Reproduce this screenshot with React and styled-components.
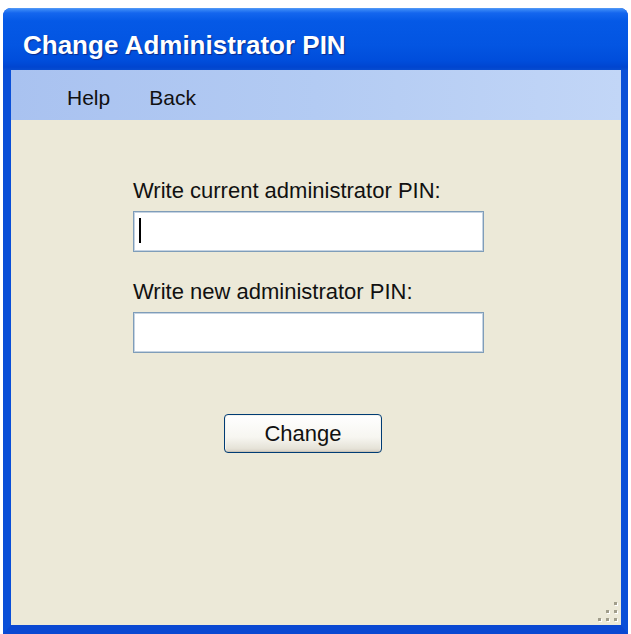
import React from "react";
import styled, { createGlobalStyle } from "styled-components";

const GlobalStyle = createGlobalStyle`
  html, body {
    margin: 0;
    padding: 0;
    background: #ffffff;
  }
  body {
    font-family: "Liberation Sans", Arial, sans-serif;
  }
`;

const ResizeGrip = () => (
  <svg width="22" height="22" viewBox="0 0 22 22">
    {[
      [16, 3],
      [8, 11],
      [16, 11],
      [0, 19],
      [8, 19],
      [16, 19],
    ].map(([x, y]) => (
      <g key={`${x}-${y}`}>
        <rect x={x + 1} y={y - 2} width="3" height="3" fill="#ffffff" />
        <rect x={x} y={y - 3} width="3" height="3" fill="#a19e8c" />
      </g>
    ))}
  </svg>
);

const App = () => {
  return (
    <>
      <GlobalStyle />
      <Page>
        <Window>
          <TitleBar>
            <Title>Change Administrator PIN</Title>
          </TitleBar>
          <Frame>
            <MenuBar>
              <MenuItem>Help</MenuItem>
              <MenuItem>Back</MenuItem>
            </MenuBar>
            <Content>
              <Form>
                <Field>
                  <Label htmlFor="current-pin">Write current administrator PIN:</Label>
                  <InputWrap>
                    <TextInput id="current-pin" type="password" />
                    <Caret />
                  </InputWrap>
                </Field>
                <Field $top={27}>
                  <Label htmlFor="new-pin">Write new administrator PIN:</Label>
                  <InputWrap>
                    <TextInput id="new-pin" type="password" />
                  </InputWrap>
                </Field>
                <ChangeButton>Change</ChangeButton>
              </Form>
              <Footer>
                <ResizeGrip />
              </Footer>
            </Content>
          </Frame>
        </Window>
      </Page>
    </>
  );
};

const Page = styled.div`
  width: 631px;
  height: 634px;
  padding: 8px 3px 0 3px;
  box-sizing: border-box;
`;

const Window = styled.div`
  display: flex;
  flex-direction: column;
  width: 625px;
  height: 626px;
  border-radius: 8px 8px 0 0;
  overflow: hidden;
  background: #0046d8;
`;

const TitleBar = styled.div`
  display: flex;
  align-items: flex-start;
  height: 62px;
  padding: 21px 0 0 20px;
  box-sizing: border-box;
  background: linear-gradient(
    to bottom,
    #3d8bf7 0px,
    #1466ee 4px,
    #0559e6 12px,
    #0355e2 36px,
    #004ddb 52px,
    #0045d0 58px,
    #0a4fd0 62px
  );
  border-top: 1px solid #4d95f5;
`;

const Title = styled.span`
  font-family: "Liberation Sans", Arial, sans-serif;
  font-weight: bold;
  font-size: 26px;
  line-height: 30px;
  color: #ffffff;
  text-shadow: 1px 1px 1px #0b2b8c;
`;

const Frame = styled.div`
  flex: 1;
  display: flex;
  flex-direction: column;
  border-left: 8px solid #0a4fd8;
  border-right: 7px solid #0a4fd8;
  border-bottom: 9px solid #0a48d2;
  box-shadow: inset 1px 0 0 #1e6cf0, inset -1px 0 0 #0034b8;
`;

const MenuBar = styled.div`
  display: flex;
  gap: 39px;
  height: 50px;
  padding: 16px 0 0 56px;
  box-sizing: border-box;
  background: linear-gradient(to right, #a9c2f0 0%, #b3cbf3 50%, #c2d6f7 100%);
`;

const MenuItem = styled.span`
  font-size: 21px;
  line-height: 24px;
  color: #111111;
`;

const Content = styled.div`
  flex: 1;
  display: flex;
  flex-direction: column;
  justify-content: space-between;
  background: #ece9d8;
`;

const Form = styled.div`
  display: flex;
  flex-direction: column;
  width: 351px;
  padding: 58px 0 0 122px;
`;

const Field = styled.div`
  display: flex;
  flex-direction: column;
  gap: 7px;
  margin-top: ${(p) => p.$top || 0}px;
`;

const Label = styled.label`
  font-size: 22px;
  line-height: 26px;
  color: #111111;
  white-space: nowrap;
`;

const InputWrap = styled.div`
  position: relative;
`;

const TextInput = styled.input`
  display: block;
  width: 100%;
  height: 41px;
  box-sizing: border-box;
  border: 1px solid #7f9db9;
  box-shadow: inset 0 0 0 1px #c5d3e2;
  background: #ffffff;
  outline: none;
  padding: 0 6px;
  font-size: 20px;
`;

const Caret = styled.span`
  position: absolute;
  left: 6px;
  top: 7px;
  width: 2px;
  height: 25px;
  background: #000000;
`;

const ChangeButton = styled.button`
  align-self: flex-start;
  margin: 61px 0 0 91px;
  width: 158px;
  height: 39px;
  border: 1px solid #003c74;
  border-radius: 4px;
  background: linear-gradient(to bottom, #ffffff 0%, #f7f6f1 60%, #e6e3d8 90%, #d6d0c5 100%);
  box-shadow: inset 0 -1px 0 #c9c4b8, inset 0 0 0 1px #f4f3ee;
  font-family: "Liberation Sans", Arial, sans-serif;
  font-size: 22px;
  color: #111111;
  padding: 0;
`;

const Footer = styled.div`
  display: flex;
  justify-content: flex-end;
  padding: 0 1px 1px 0;
`;

export default App;
